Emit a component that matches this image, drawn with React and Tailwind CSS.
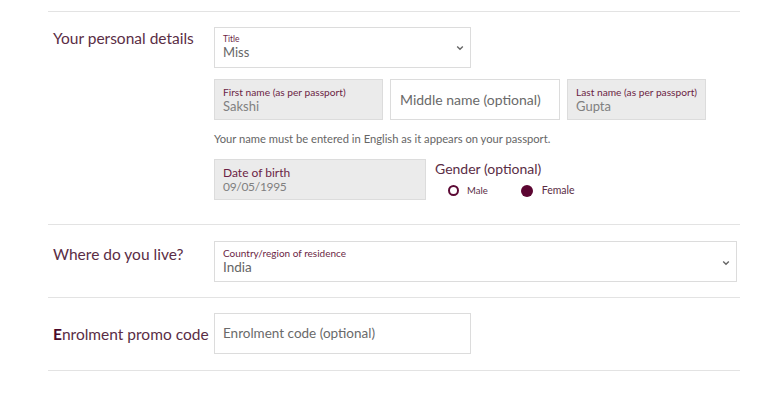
import React from "react";

const Chevron = ({ className = "" }) => (
  <svg width="8" height="6" viewBox="0 0 8 6" className={className}>
    <path d="M1.2 1.5 L4 4.3 L6.8 1.5" fill="none" stroke="#666" strokeWidth="1.4" />
  </svg>
);

export default function App() {
  const font = { fontFamily: "Lato, 'Open Sans', sans-serif" };
  return (
    <div className="w-[760px] h-[400px] bg-white" style={font}>
      <div className="ml-[48px] w-[692px] pt-[11px]">
        {/* Section 1 */}
        <div className="border-t border-[#e3e3e3] pt-[15px] pb-[24px] flex">
          <div className="w-[166px] pl-[5px] pt-[1px] text-[15.5px] leading-[20px] text-[#5a2d45]">
            Your personal details
          </div>
          <div className="flex flex-col">
            <div className="w-[257px] h-[41px] border border-[#dcdcdc] bg-white flex items-center justify-between pl-[8px] pr-[6px]">
              <div className="flex flex-col -mt-[2px]">
                <span className="text-[8.5px] leading-[10px] text-[#6b1f45]">Title</span>
                <span className="text-[13px] leading-[16px] text-[#666]">Miss</span>
              </div>
              <Chevron />
            </div>
            <div className="flex gap-[7px] mt-[11px]">
              <div className="w-[169px] h-[41px] border border-[#dcdcdc] bg-[#ebebeb] flex flex-col justify-center pl-[8px]">
                <span className="text-[10.2px] leading-[12px] text-[#6b1f45]">First name (as per passport)</span>
                <span className="text-[13px] leading-[16px] text-[#808080]">Sakshi</span>
              </div>
              <div className="w-[170px] h-[41px] border border-[#dcdcdc] bg-white flex items-center pl-[9px]">
                <span className="text-[14px] text-[#6a6a6a]">Middle name (optional)</span>
              </div>
              <div className="w-[139px] h-[41px] border border-[#dcdcdc] bg-[#ebebeb] flex flex-col justify-center pl-[8px]">
                <span className="text-[10.2px] leading-[12px] text-[#6b1f45]">Last name (as per passport)</span>
                <span className="text-[13px] leading-[16px] text-[#808080]">Gupta</span>
              </div>
            </div>
            <div className="mt-[12px] text-[11.2px] leading-[14px] text-[#666]">
              Your name must be entered in English as it appears on your passport.
            </div>
            <div className="flex mt-[13px]">
              <div className="w-[212px] h-[41px] border border-[#dcdcdc] bg-[#ebebeb] flex flex-col justify-center pl-[8px]">
                <span className="text-[12px] leading-[14px] text-[#6b1f45]">Date of birth</span>
                <span className="text-[12px] leading-[14px] text-[#808080] tracking-[-0.3px]">09/05/1995</span>
              </div>
              <div className="ml-[9px] pt-[1px]">
                <div className="text-[14px] leading-[18px] text-[#5a2d45]">Gender (optional)</div>
                <div className="flex items-center mt-[5px] ml-[13px]">
                  <span className="w-[11px] h-[11px] rounded-full border-2 border-[#5c0a35] bg-white"></span>
                  <span className="ml-[8px] text-[9.5px] text-[#5a2d45]">Male</span>
                  <span className="ml-[33px] w-[12px] h-[12px] rounded-full bg-[#5c0632]"></span>
                  <span className="ml-[9px] text-[10.5px] text-[#5a2d45]">Female</span>
                </div>
              </div>
            </div>
          </div>
        </div>
        {/* Section 2 */}
        <div className="border-t border-[#e3e3e3] pt-[16px] pb-[15px] flex">
          <div className="w-[166px] pl-[5px] pt-[3px] text-[15.5px] leading-[20px] text-[#5a2d45]">
            Where do you live?
          </div>
          <div className="w-[523px] h-[41px] border border-[#dcdcdc] bg-white flex items-center justify-between pl-[8px] pr-[6px]">
            <div className="flex flex-col -mt-[1px]">
              <span className="text-[10px] leading-[12px] text-[#6b1f45]">Country/region of residence</span>
              <span className="text-[13.5px] leading-[16px] text-[#666]">India</span>
            </div>
            <Chevron className="mt-[2px]" />
          </div>
        </div>
        {/* Section 3 */}
        <div className="border-t border-[#e3e3e3] pt-[15px] pb-[16px] flex items-center">
          <div className="w-[166px] pl-[5px] text-[15.5px] leading-[20px] text-[#5a2d45]">
            <span className="font-bold text-[#4a0a2a]">E</span>nrolment promo code
          </div>
          <div className="w-[257px] h-[41px] border border-[#dcdcdc] bg-white flex items-center pl-[8px]">
            <span className="text-[13.5px] text-[#6a6a6a]">Enrolment code (optional)</span>
          </div>
        </div>
        <div className="border-t border-[#e3e3e3]"></div>
      </div>
    </div>
  );
}
